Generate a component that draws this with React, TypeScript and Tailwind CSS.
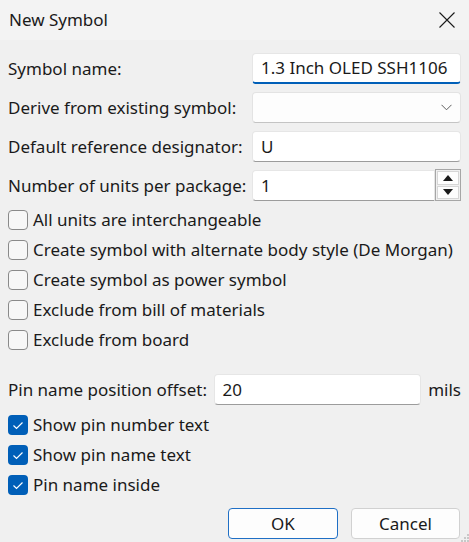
import React from "react";

const font = { fontFamily: '"Noto Sans", "Open Sans", sans-serif' };

function TextBox({ value, className = "", focused = false }: { value: string; className?: string; focused?: boolean }) {
    return (
        <div
            className={`h-[31px] bg-white rounded-[4px] border border-[#e6e6e6] flex items-center pl-[8px] text-[17px] text-[#1a1a1a] ${
                focused ? "border-b-2 border-b-[#005fb8]" : "border-b-[#9c9c9c]"
            } ${className}`}
        >
            {value}
        </div>
    );
}

function Check({ label, checked = false }: { label: string; checked?: boolean }) {
    return (
        <div className="h-[30px] flex items-center gap-[5px]">
            {checked ? (
                <div className="w-[20px] h-[20px] rounded-[4px] bg-[#005fb8] flex items-center justify-center">
                    <svg width="12" height="9" viewBox="0 0 12 9">
                        <path d="M1.5 4.5 L4.5 7.5 L10.5 1.5" fill="none" stroke="white" strokeWidth="1.2" />
                    </svg>
                </div>
            ) : (
                <div className="w-[20px] h-[20px] rounded-[4px] border border-[#8a8a8a] bg-[#f7f7f7]" />
            )}
            <span className="text-[17px] text-[#1a1a1a]">{label}</span>
        </div>
    );
}

export default function App() {
    return (
        <div className="w-[469px] h-[542px] bg-[#f0f0f0] relative overflow-hidden text-[#1a1a1a]" style={font}>
            {/* title bar */}
            <div className="h-[40px] bg-[#f3f3f3] flex items-center justify-between pl-[9px] pr-[14px]">
                <span className="text-[17px]">New Symbol</span>
                <svg width="16" height="16" viewBox="0 0 16 16">
                    <path d="M0.5 0.5 L15.5 15.5 M15.5 0.5 L0.5 15.5" stroke="#1a1a1a" strokeWidth="1.1" />
                </svg>
            </div>

            <div className="px-[8px]">
                <div className="mt-[13px] grid grid-cols-[244px_209px] gap-y-[8px] items-center">
                    <span className="text-[17px]">Symbol name:</span>
                    <TextBox value="1.3 Inch OLED SSH1106" focused />

                    <span className="text-[17px]">Derive from existing symbol:</span>
                    <div className="h-[31px] bg-[#fdfdfd] rounded-[4px] border border-[#e3e3e3] border-b-[#c4c4c4] flex items-center justify-end pr-[8px]">
                        <svg width="11" height="7" viewBox="0 0 11 7">
                            <path d="M0.5 0.8 L5.5 5.8 L10.5 0.8" fill="none" stroke="#5e5e5e" strokeWidth="1" />
                        </svg>
                    </div>

                    <span className="text-[17px]">Default reference designator:</span>
                    <TextBox value="U" />

                    <span className="text-[17px]">Number of units per package:</span>
                    <div className="flex h-[31px]">
                        <TextBox value="1" className="w-[184px] rounded-r-none" />
                        <div className="w-[26px] h-[32px] -mt-[1px] border border-[#a6a6a6] bg-[#f0f0f0] flex flex-col p-[1px] gap-[1px]">
                            <div className="flex-1 bg-[#fdfdfd] border border-[#d6d6d6] flex items-center justify-center">
                                <svg width="10" height="6" viewBox="0 0 10 6">
                                    <path d="M0 6 L5 0 L10 6 Z" fill="#1a1a1a" />
                                </svg>
                            </div>
                            <div className="flex-1 bg-[#fdfdfd] border border-[#d6d6d6] flex items-center justify-center">
                                <svg width="10" height="6" viewBox="0 0 10 6">
                                    <path d="M0 0 L5 6 L10 0 Z" fill="#1a1a1a" />
                                </svg>
                            </div>
                        </div>
                    </div>
                </div>

                <div className="mt-[4px] flex flex-col">
                    <Check label="All units are interchangeable" />
                    <Check label="Create symbol with alternate body style (De Morgan)" />
                    <Check label="Create symbol as power symbol" />
                    <Check label="Exclude from bill of materials" />
                    <Check label="Exclude from board" />
                </div>

                <div className="mt-[19px] flex items-center">
                    <span className="w-[206px] text-[17px]">Pin name position offset:</span>
                    <TextBox value="20" className="w-[208px]" />
                    <span className="ml-[7px] text-[17px]">mils</span>
                </div>

                <div className="mt-[5px] flex flex-col">
                    <Check label="Show pin number text" checked />
                    <Check label="Show pin name text" checked />
                    <Check label="Pin name inside" checked />
                </div>

                <div className="mt-[8px] flex justify-end gap-[13px] pr-[1px]">
                    <button className="w-[110px] h-[31px] rounded-[4px] bg-[#fdfdfd] border border-[#1f6fc5] text-[17px]">
                        OK
                    </button>
                    <button className="w-[109px] h-[31px] rounded-[4px] bg-[#fdfdfd] border border-[#d1d1d1] text-[17px]">
                        Cancel
                    </button>
                </div>
            </div>

            {/* size grip */}
            <svg className="absolute right-0 bottom-0" width="8" height="8" viewBox="0 0 8 8">
                <rect x="6" y="0" width="2" height="2" fill="#c8c8c8" />
                <rect x="3" y="3" width="2" height="2" fill="#c8c8c8" />
                <rect x="6" y="3" width="2" height="2" fill="#c8c8c8" />
                <rect x="0" y="6" width="2" height="2" fill="#c8c8c8" />
                <rect x="3" y="6" width="2" height="2" fill="#c8c8c8" />
                <rect x="6" y="6" width="2" height="2" fill="#c8c8c8" />
            </svg>
        </div>
    );
}
